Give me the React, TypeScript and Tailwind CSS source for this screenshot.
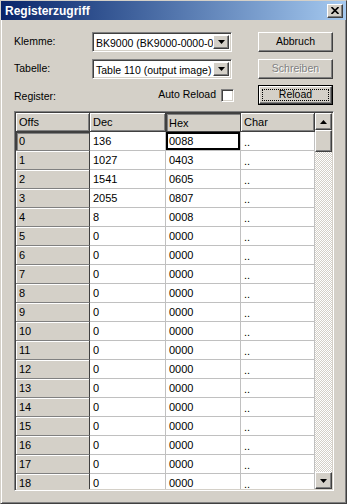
import React from 'react';

const raised =
  'border border-t-white border-l-white border-b-[#404040] border-r-[#404040] shadow-[inset_-1px_-1px_#808080]';
const sunken =
  'border border-t-[#808080] border-l-[#808080] border-b-white border-r-white shadow-[inset_1px_1px_#404040,inset_-1px_-1px_#d4d0c8]';

const rows: [string, string][] = [
  ['136', '0088'],
  ['1027', '0403'],
  ['1541', '0605'],
  ['2055', '0807'],
  ['8', '0008'],
  ...Array.from({ length: 14 }, () => ['0', '0000'] as [string, string]),
];

function Arrow({ up }: { up?: boolean }) {
  return (
    <svg width="7" height="4" viewBox="0 0 7 4">
      <path d={up ? 'M3.5 0 L7 4 L0 4 Z' : 'M0 0 L7 0 L3.5 4 Z'} fill="#000" />
    </svg>
  );
}

function Combo({ text }: { text: string }) {
  return (
    <div className={`w-[140px] h-[20px] bg-white flex items-stretch p-[2px] ${sunken}`}>
      <div className="flex-1 overflow-hidden whitespace-nowrap pl-[1px] leading-[16px] text-black">{text}</div>
      <div className={`w-[16px] bg-[#d4d0c8] flex items-center justify-center ${raised}`}>
        <Arrow />
      </div>
    </div>
  );
}

function Button({ label, disabled, focused }: { label: string; disabled?: boolean; focused?: boolean }) {
  if (focused) {
    return (
      <div className="w-[75px] h-[20px] border border-black">
        <div className={`w-full h-full bg-[#d4d0c8] flex items-center justify-center p-[2px] ${raised}`}>
          <div className="w-full h-full border border-dotted border-black flex items-center justify-center">
            {label}
          </div>
        </div>
      </div>
    );
  }
  return (
    <div
      className={`w-[75px] h-[20px] bg-[#d4d0c8] flex items-center justify-center ${raised} ${
        disabled ? 'text-[#808080] [text-shadow:1px_1px_#fff]' : 'text-black'
      }`}
    >
      {label}
    </div>
  );
}

const colW = ['w-[74px]', 'w-[76px]', 'w-[75px]', 'w-[74px]'];

export default function App() {
  return (
    <div className="w-[347px] h-[504px] bg-[#d4d0c8] border border-t-[#d4d0c8] border-l-[#d4d0c8] border-b-[#404040] border-r-[#404040] shadow-[inset_1px_1px_#fff,inset_-1px_-1px_#808080] flex flex-col font-['Liberation_Sans',Arial,sans-serif] text-[10.5px] text-black overflow-hidden">
      {/* title bar */}
      <div className="h-[19px] shrink-0 flex items-center justify-between pl-[4px] pr-[3px] bg-gradient-to-r from-[#0a246a] to-[#a6caf0]">
        <span className="text-white font-bold text-[12px]">Registerzugriff</span>
        <div className={`w-[16px] h-[14px] bg-[#d4d0c8] flex items-center justify-center ${raised}`}>
          <svg width="8" height="7" viewBox="0 0 8 7">
            <path d="M0.5 0 L7.5 7 M7.5 0 L0.5 7" stroke="#000" strokeWidth="1.6" />
          </svg>
        </div>
      </div>

      <div className="flex flex-col pl-[13px]">
        <div className="mt-[12px] flex items-start h-[21px]">
          <div className="w-[78px] h-[20px] flex items-center">Klemme:</div>
          <Combo text="BK9000 (BK9000-0000-0000)" />
          <div className="ml-[26px]">
            <Button label="Abbruch" />
          </div>
        </div>
        <div className="mt-[6px] flex items-start h-[20px]">
          <div className="w-[78px] h-[20px] flex items-center">Tabelle:</div>
          <Combo text="Table 110 (output image)" />
          <div className="ml-[26px]">
            <Button label="Schreiben" disabled />
          </div>
        </div>
        <div className="mt-[6px] flex items-start h-[20px]">
          <div className="w-[78px] h-[20px] flex items-center pt-[4px]">Register:</div>
          <div className="w-[142px] h-[20px] flex items-center justify-end gap-[5px]">
            <span>Auto Reload</span>
            <div className={`w-[13px] h-[13px] bg-white ${sunken}`} />
          </div>
          <div className="ml-[24px]">
            <Button label="Reload" focused />
          </div>
        </div>
      </div>

      {/* grid */}
      <div className={`mt-[6px] ml-[13px] w-[320px] h-[380px] flex bg-white p-[1px] text-[11px] ${sunken}`}>
        <div className="flex-1 flex flex-col overflow-hidden">
          <div className="h-[19px] shrink-0 flex">
            {['Offs', 'Dec', 'Hex', 'Char'].map((h, i) => (
              <div
                key={h}
                className={`${colW[i]} h-full bg-[#d4d0c8] flex items-center pl-[3px] border-r border-b border-r-[#404040] border-b-[#404040] ${
                  h === 'Hex'
                    ? 'shadow-[inset_1px_1px_#404040,inset_2px_2px_#808080] pt-[2px]'
                    : 'shadow-[inset_1px_1px_#fff,inset_-1px_-1px_#808080]'
                }`}
              >
                {h}
              </div>
            ))}
          </div>
          {rows.map(([dec, hex], r) => (
            <div key={r} className="h-[19px] shrink-0 flex">
              <div
                className={`${colW[0]} h-full bg-[#d4d0c8] flex items-center pl-[3px] border-r border-b border-r-[#404040] border-b-[#808080] ${
                  r === 0
                    ? 'shadow-[inset_1px_1px_#404040,inset_2px_2px_#808080]'
                    : 'shadow-[inset_1px_1px_#fff]'
                }`}
              >
                {r}
              </div>
              <div className={`${colW[1]} h-full flex items-center pl-[3px] border-r border-b border-[#c0c0c0]`}>{dec}</div>
              <div
                className={`${colW[2]} h-full flex items-center pl-[3px] border-r border-b border-[#c0c0c0] ${
                  r === 0 ? 'shadow-[inset_0_0_0_2px_#000]' : ''
                }`}
              >
                {hex}
              </div>
              <div className={`${colW[3]} h-full flex items-center pl-[3px] pt-[3px] border-r border-b border-[#c0c0c0]`}>..</div>
            </div>
          ))}
        </div>
        {/* scrollbar */}
        <div className="w-[17px] flex flex-col">
          <div className={`h-[17px] shrink-0 bg-[#d4d0c8] flex items-center justify-center ${raised}`}>
            <Arrow up />
          </div>
          <div className={`h-[22px] shrink-0 bg-[#d4d0c8] ${raised}`} />
          <div className="flex-1 bg-[repeating-conic-gradient(#fff_0_25%,#d4d0c8_0_50%)] [background-size:2px_2px]" />
          <div className={`h-[17px] shrink-0 bg-[#d4d0c8] flex items-center justify-center ${raised}`}>
            <Arrow />
          </div>
        </div>
      </div>
    </div>
  );
}
